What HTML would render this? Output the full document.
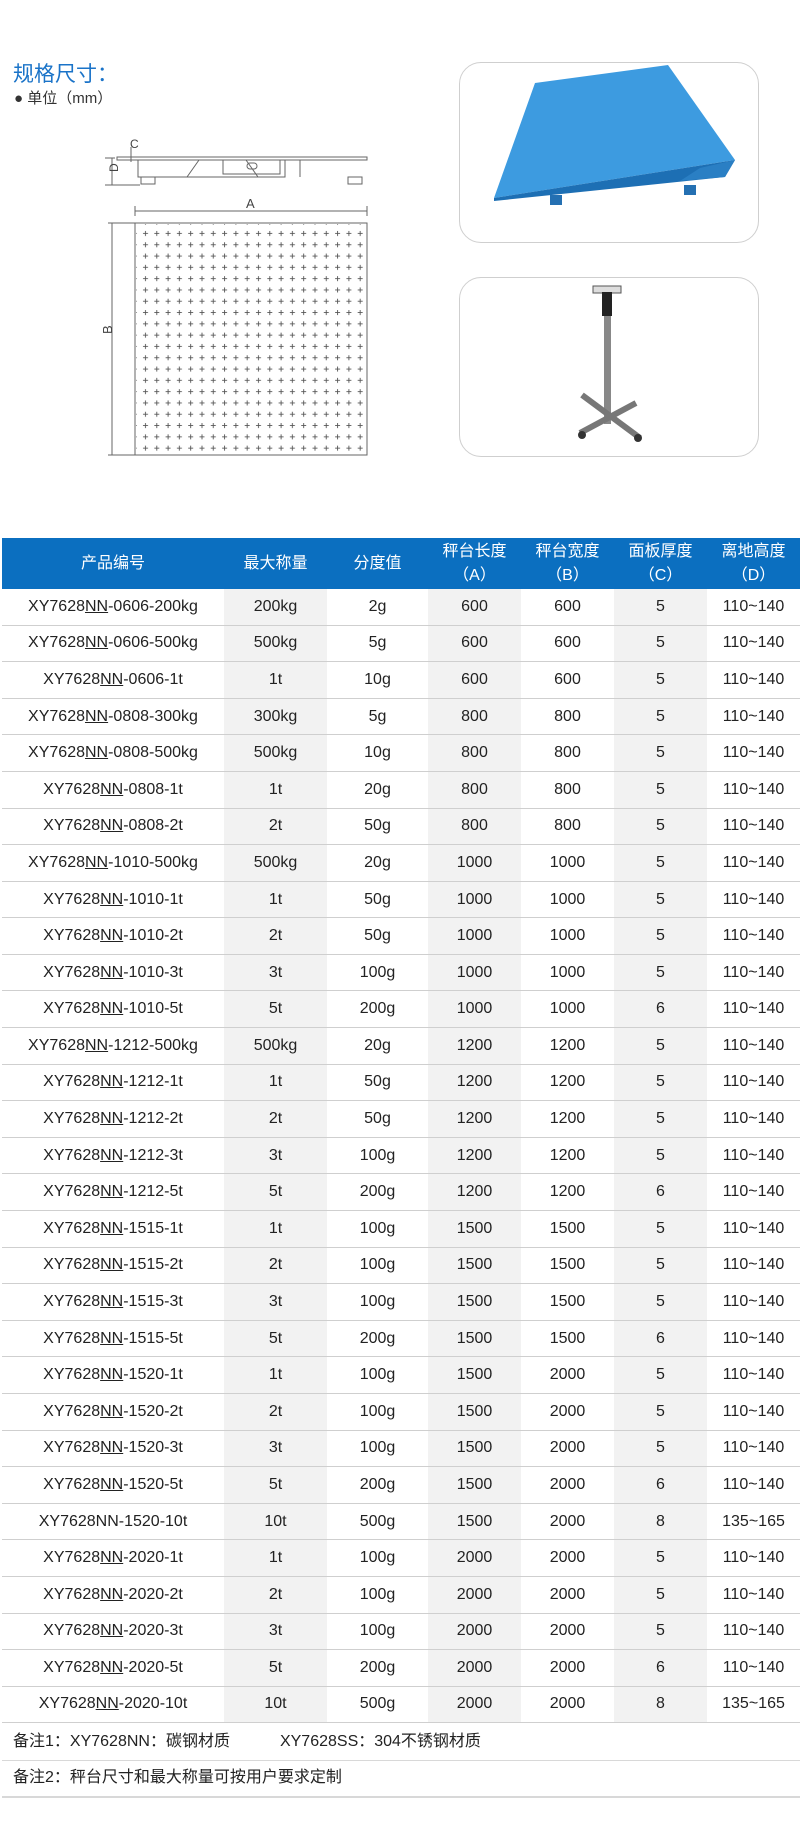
<!DOCTYPE html>
<html><head><meta charset="utf-8"><style>
body{margin:0;width:800px;height:1843px;background:#fff;font-family:"Liberation Sans","Noto Sans CJK SC",sans-serif;position:relative;overflow:hidden}
.abs{position:absolute}
.card{position:absolute;border:1px solid #cfcfcf;border-radius:22px;background:#fff}
.hd{position:absolute;left:2px;top:538px;width:798px;background:#0b6fc0;height:51px;display:flex}
.hd div{color:#fff;font-size:16px;display:flex;align-items:center;justify-content:center;text-align:center;line-height:24px;height:51px}
.row{position:absolute;left:2px;width:798px;display:flex;height:36.6px;border-bottom:1.5px solid #cfcfcf;box-sizing:border-box;overflow:hidden}
.row div{display:flex;align-items:center;justify-content:center;font-size:16px;line-height:20px;color:#222;height:100%}
.c1{width:222px}.c2{width:103px}.c3{width:101px}.c4{width:93px}.c5{width:93px}.c6{width:93px}.c7{width:93px}
.row .c2,.row .c4,.row .c6{background:#f2f2f2}
u{text-decoration:underline}
.note{position:absolute;left:13px;font-size:16px;color:#222;line-height:20px}
.ln{position:absolute;left:2px;width:798px;height:1.5px;background:#d8d8d8}
</style></head><body>
<div class="abs" style="left:13px;top:58px;font-size:21px;color:#1a73c8">规格尺寸：</div>
<div class="abs" style="left:14px;top:87px;font-size:15px;color:#333">● 单位（mm）</div>

<svg class="abs" style="left:95px;top:125px" width="290" height="340" viewBox="95 125 290 340">
<g stroke="#666" fill="none" stroke-width="1">
<rect x="117" y="157" width="250" height="3"/>
<path d="M138 160v17h49l12-17M246 160l12 17h27M285 160v17h-147"/>
<path d="M300 160v17"/>
<rect x="223" y="160" width="57" height="14"/>
<rect x="247" y="163" width="10" height="6" rx="3"/>
<rect x="141" y="177" width="14" height="7"/><rect x="348" y="177" width="14" height="7"/>
<path d="M112 158v27M105 158h10M105 185h35M131 147v15"/>
<path d="M135 211h232M135 206v10M367 206v10M135 223h232v232h-232zM112 223v232M108 223h27M108 455h27"/>
</g>
<text x="130" y="148" font-size="12" fill="#444" font-family="Liberation Sans">C</text>
<text x="110" y="180" font-size="12" fill="#444" font-family="Liberation Sans" transform="rotate(-90 110 172)">D</text>
<text x="246" y="208" font-size="13" fill="#444" font-family="Liberation Sans">A</text>
<text x="110" y="340" font-size="13" fill="#444" font-family="Liberation Sans" transform="rotate(-90 108 336)">B</text>
<defs><pattern id="p" x="140" y="228" width="11.3" height="11.3" patternUnits="userSpaceOnUse"><path d="M3 5.5h5M5.5 3v5" stroke="#555" stroke-width="0.9"/></pattern></defs>
<rect x="136" y="224" width="230" height="230" fill="url(#p)"/>
</svg>

<div class="card" style="left:459px;top:62px;width:298px;height:179px">
<svg width="298" height="179"><polygon points="75,20 208,2 275,97 34,135" fill="#3d9be0"/><polygon points="34,135 275,97 265,114 34,138" fill="#1d6fb4"/><polygon points="240,105 275,97 265,114 220,118" fill="#2a7fc4"/><rect x="90" y="132" width="12" height="10" fill="#2470b2"/><rect x="224" y="122" width="12" height="10" fill="#2470b2"/></svg>
</div>
<div class="card" style="left:459px;top:277px;width:298px;height:178px">
<svg width="298" height="178"><rect x="133" y="8" width="28" height="7" fill="#ddd" stroke="#555"/><rect x="142" y="14" width="10" height="24" fill="#222"/><rect x="144" y="38" width="7" height="108" fill="#888"/><path d="M120 155L176 125M122 117L180 160" stroke="#777" stroke-width="6"/><circle cx="122" cy="157" r="4" fill="#333"/><circle cx="178" cy="160" r="4" fill="#333"/></svg>
</div>

<div class="hd"><div class="c1">产品编号</div><div class="c2">最大称量</div><div class="c3">分度值</div><div class="c4">秤台长度<br>（A）</div><div class="c5">秤台宽度<br>（B）</div><div class="c6">面板厚度<br>（C）</div><div class="c7">离地高度<br>（D）</div></div>
<div class="row" style="top:589px"><div class="c1">XY7628<u>NN</u>-0606-200kg</div><div class="c2">200kg</div><div class="c3">2g</div><div class="c4">600</div><div class="c5">600</div><div class="c6">5</div><div class="c7">110~140</div></div>
<div class="row" style="top:625.59px"><div class="c1">XY7628<u>NN</u>-0606-500kg</div><div class="c2">500kg</div><div class="c3">5g</div><div class="c4">600</div><div class="c5">600</div><div class="c6">5</div><div class="c7">110~140</div></div>
<div class="row" style="top:662.18px"><div class="c1">XY7628<u>NN</u>-0606-1t</div><div class="c2">1t</div><div class="c3">10g</div><div class="c4">600</div><div class="c5">600</div><div class="c6">5</div><div class="c7">110~140</div></div>
<div class="row" style="top:698.77px"><div class="c1">XY7628<u>NN</u>-0808-300kg</div><div class="c2">300kg</div><div class="c3">5g</div><div class="c4">800</div><div class="c5">800</div><div class="c6">5</div><div class="c7">110~140</div></div>
<div class="row" style="top:735.36px"><div class="c1">XY7628<u>NN</u>-0808-500kg</div><div class="c2">500kg</div><div class="c3">10g</div><div class="c4">800</div><div class="c5">800</div><div class="c6">5</div><div class="c7">110~140</div></div>
<div class="row" style="top:771.95px"><div class="c1">XY7628<u>NN</u>-0808-1t</div><div class="c2">1t</div><div class="c3">20g</div><div class="c4">800</div><div class="c5">800</div><div class="c6">5</div><div class="c7">110~140</div></div>
<div class="row" style="top:808.54px"><div class="c1">XY7628<u>NN</u>-0808-2t</div><div class="c2">2t</div><div class="c3">50g</div><div class="c4">800</div><div class="c5">800</div><div class="c6">5</div><div class="c7">110~140</div></div>
<div class="row" style="top:845.13px"><div class="c1">XY7628<u>NN</u>-1010-500kg</div><div class="c2">500kg</div><div class="c3">20g</div><div class="c4">1000</div><div class="c5">1000</div><div class="c6">5</div><div class="c7">110~140</div></div>
<div class="row" style="top:881.72px"><div class="c1">XY7628<u>NN</u>-1010-1t</div><div class="c2">1t</div><div class="c3">50g</div><div class="c4">1000</div><div class="c5">1000</div><div class="c6">5</div><div class="c7">110~140</div></div>
<div class="row" style="top:918.31px"><div class="c1">XY7628<u>NN</u>-1010-2t</div><div class="c2">2t</div><div class="c3">50g</div><div class="c4">1000</div><div class="c5">1000</div><div class="c6">5</div><div class="c7">110~140</div></div>
<div class="row" style="top:954.9px"><div class="c1">XY7628<u>NN</u>-1010-3t</div><div class="c2">3t</div><div class="c3">100g</div><div class="c4">1000</div><div class="c5">1000</div><div class="c6">5</div><div class="c7">110~140</div></div>
<div class="row" style="top:991.49px"><div class="c1">XY7628<u>NN</u>-1010-5t</div><div class="c2">5t</div><div class="c3">200g</div><div class="c4">1000</div><div class="c5">1000</div><div class="c6">6</div><div class="c7">110~140</div></div>
<div class="row" style="top:1028.08px"><div class="c1">XY7628<u>NN</u>-1212-500kg</div><div class="c2">500kg</div><div class="c3">20g</div><div class="c4">1200</div><div class="c5">1200</div><div class="c6">5</div><div class="c7">110~140</div></div>
<div class="row" style="top:1064.67px"><div class="c1">XY7628<u>NN</u>-1212-1t</div><div class="c2">1t</div><div class="c3">50g</div><div class="c4">1200</div><div class="c5">1200</div><div class="c6">5</div><div class="c7">110~140</div></div>
<div class="row" style="top:1101.26px"><div class="c1">XY7628<u>NN</u>-1212-2t</div><div class="c2">2t</div><div class="c3">50g</div><div class="c4">1200</div><div class="c5">1200</div><div class="c6">5</div><div class="c7">110~140</div></div>
<div class="row" style="top:1137.85px"><div class="c1">XY7628<u>NN</u>-1212-3t</div><div class="c2">3t</div><div class="c3">100g</div><div class="c4">1200</div><div class="c5">1200</div><div class="c6">5</div><div class="c7">110~140</div></div>
<div class="row" style="top:1174.44px"><div class="c1">XY7628<u>NN</u>-1212-5t</div><div class="c2">5t</div><div class="c3">200g</div><div class="c4">1200</div><div class="c5">1200</div><div class="c6">6</div><div class="c7">110~140</div></div>
<div class="row" style="top:1211.03px"><div class="c1">XY7628<u>NN</u>-1515-1t</div><div class="c2">1t</div><div class="c3">100g</div><div class="c4">1500</div><div class="c5">1500</div><div class="c6">5</div><div class="c7">110~140</div></div>
<div class="row" style="top:1247.62px"><div class="c1">XY7628<u>NN</u>-1515-2t</div><div class="c2">2t</div><div class="c3">100g</div><div class="c4">1500</div><div class="c5">1500</div><div class="c6">5</div><div class="c7">110~140</div></div>
<div class="row" style="top:1284.21px"><div class="c1">XY7628<u>NN</u>-1515-3t</div><div class="c2">3t</div><div class="c3">100g</div><div class="c4">1500</div><div class="c5">1500</div><div class="c6">5</div><div class="c7">110~140</div></div>
<div class="row" style="top:1320.8px"><div class="c1">XY7628<u>NN</u>-1515-5t</div><div class="c2">5t</div><div class="c3">200g</div><div class="c4">1500</div><div class="c5">1500</div><div class="c6">6</div><div class="c7">110~140</div></div>
<div class="row" style="top:1357.39px"><div class="c1">XY7628<u>NN</u>-1520-1t</div><div class="c2">1t</div><div class="c3">100g</div><div class="c4">1500</div><div class="c5">2000</div><div class="c6">5</div><div class="c7">110~140</div></div>
<div class="row" style="top:1393.98px"><div class="c1">XY7628<u>NN</u>-1520-2t</div><div class="c2">2t</div><div class="c3">100g</div><div class="c4">1500</div><div class="c5">2000</div><div class="c6">5</div><div class="c7">110~140</div></div>
<div class="row" style="top:1430.57px"><div class="c1">XY7628<u>NN</u>-1520-3t</div><div class="c2">3t</div><div class="c3">100g</div><div class="c4">1500</div><div class="c5">2000</div><div class="c6">5</div><div class="c7">110~140</div></div>
<div class="row" style="top:1467.16px"><div class="c1">XY7628<u>NN</u>-1520-5t</div><div class="c2">5t</div><div class="c3">200g</div><div class="c4">1500</div><div class="c5">2000</div><div class="c6">6</div><div class="c7">110~140</div></div>
<div class="row" style="top:1503.75px"><div class="c1">XY7628NN-1520-10t</div><div class="c2">10t</div><div class="c3">500g</div><div class="c4">1500</div><div class="c5">2000</div><div class="c6">8</div><div class="c7">135~165</div></div>
<div class="row" style="top:1540.34px"><div class="c1">XY7628<u>NN</u>-2020-1t</div><div class="c2">1t</div><div class="c3">100g</div><div class="c4">2000</div><div class="c5">2000</div><div class="c6">5</div><div class="c7">110~140</div></div>
<div class="row" style="top:1576.93px"><div class="c1">XY7628<u>NN</u>-2020-2t</div><div class="c2">2t</div><div class="c3">100g</div><div class="c4">2000</div><div class="c5">2000</div><div class="c6">5</div><div class="c7">110~140</div></div>
<div class="row" style="top:1613.52px"><div class="c1">XY7628<u>NN</u>-2020-3t</div><div class="c2">3t</div><div class="c3">100g</div><div class="c4">2000</div><div class="c5">2000</div><div class="c6">5</div><div class="c7">110~140</div></div>
<div class="row" style="top:1650.11px"><div class="c1">XY7628<u>NN</u>-2020-5t</div><div class="c2">5t</div><div class="c3">200g</div><div class="c4">2000</div><div class="c5">2000</div><div class="c6">6</div><div class="c7">110~140</div></div>
<div class="row" style="top:1686.7px"><div class="c1">XY7628<u>NN</u>-2020-10t</div><div class="c2">10t</div><div class="c3">500g</div><div class="c4">2000</div><div class="c5">2000</div><div class="c6">8</div><div class="c7">135~165</div></div>
<div class="note" style="top:1732px">备注1：XY7628NN：碳钢材质<span style="margin-left:50px">XY7628SS：304不锈钢材质</span></div>
<div class="ln" style="top:1759.5px"></div>
<div class="note" style="top:1768px">备注2：秤台尺寸和最大称量可按用户要求定制</div>
<div class="ln" style="top:1796px"></div>
</body></html>
